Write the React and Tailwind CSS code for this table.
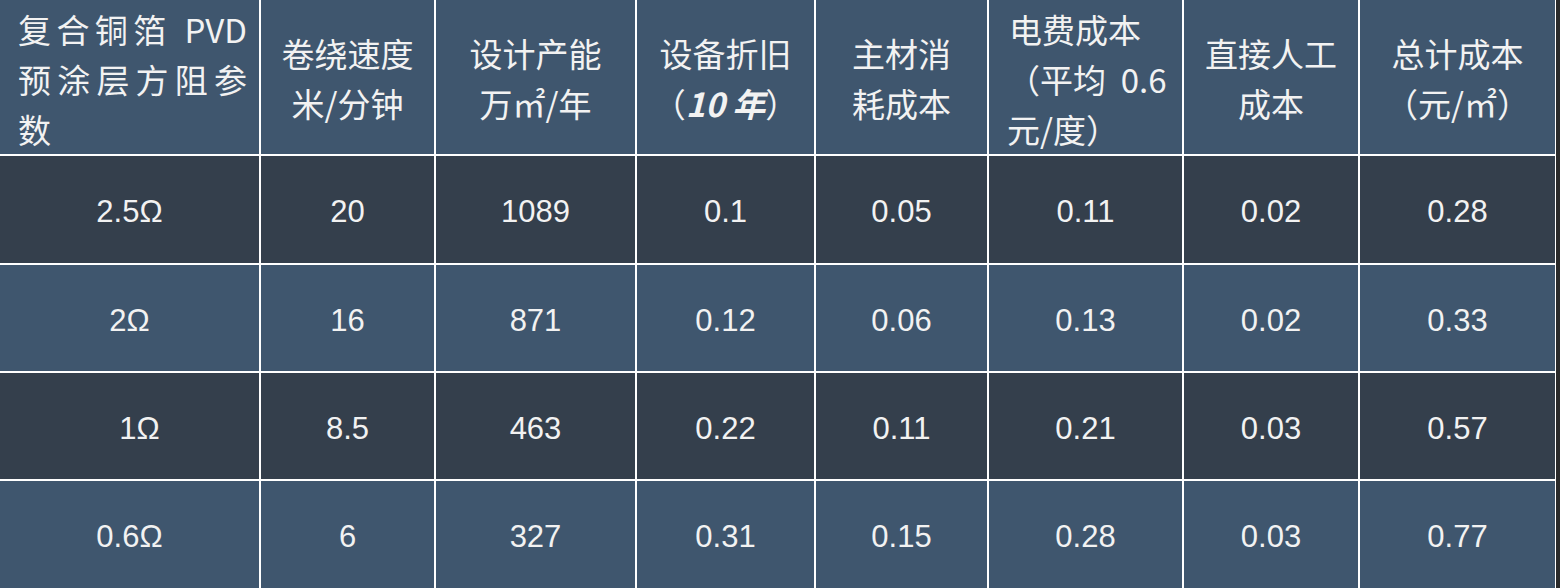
import React from "react";

const LIGHT = "bg-[#3f566e]";
const DARK = "bg-[#343f4c]";

const rows = [
  ["2.5Ω", "20", "1089", "0.1", "0.05", "0.11", "0.02", "0.28"],
  ["2Ω", "16", "871", "0.12", "0.06", "0.13", "0.02", "0.33"],
  ["1Ω", "8.5", "463", "0.22", "0.11", "0.21", "0.03", "0.57"],
  ["0.6Ω", "6", "327", "0.31", "0.15", "0.28", "0.03", "0.77"],
];

const cjk = "font-['Noto_Sans_CJK_SC','Noto_Sans',sans-serif]";

function HeadCell({ children, className = "" }) {
  return (
    <div
      className={`${LIGHT} ${cjk} flex flex-col justify-center text-[33px] leading-[50px] text-[#f2f2f2] ${className}`}
    >
      {children}
    </div>
  );
}

export default function App() {
  return (
    <div className="w-[1560px] h-[588px] overflow-hidden bg-[#2b2b2b]">
      <div className="w-[1556px] h-[588px] bg-white border-r border-white grid grid-cols-[259px_173px_199px_177px_171px_193px_174px_195px] grid-rows-[154px_107px_106px_106px_107px] gap-[2px]">
        <HeadCell className="pl-[18px] pr-[12px] pt-[4px]">
          <div className="text-justify [text-align-last:justify]">复合铜箔 PVD</div>
          <div className="text-justify [text-align-last:justify]">预涂层方阻参</div>
          <div>数</div>
        </HeadCell>
        <HeadCell className="items-center pt-[2px]">
          <div>卷绕速度</div>
          <div>米/分钟</div>
        </HeadCell>
        <HeadCell className="items-center pt-[2px]">
          <div>设计产能</div>
          <div>万㎡/年</div>
        </HeadCell>
        <HeadCell className="items-center pt-[2px]">
          <div>设备折旧</div>
          <div>
            （<span className="font-bold italic">10 年</span>）
          </div>
        </HeadCell>
        <HeadCell className="items-center pt-[2px]">
          <div>主材消</div>
          <div>耗成本</div>
        </HeadCell>
        <HeadCell className="pl-[18px] pr-[8px] pt-[4px]">
          <div className="pl-[2px]">电费成本</div>
          <div>（平均&nbsp; 0.6</div>
          <div>元/度）</div>
        </HeadCell>
        <HeadCell className="items-center pt-[2px]">
          <div>直接人工</div>
          <div>成本</div>
        </HeadCell>
        <HeadCell className="items-center pt-[2px]">
          <div>总计成本</div>
          <div>（元/㎡）</div>
        </HeadCell>
        {rows.map((r, i) =>
          r.map((v, j) => (
            <div
              key={`${i}-${j}`}
              className={`${i % 2 === 0 ? DARK : LIGHT} flex items-center justify-center pt-[6px] font-['Liberation_Sans',Arial,sans-serif] text-[31px] text-[#f2f2f2] ${j === 0 && v === "1Ω" ? "pl-[20px]" : ""}`}
            >
              {v}
            </div>
          ))
        )}
      </div>
    </div>
  );
}
